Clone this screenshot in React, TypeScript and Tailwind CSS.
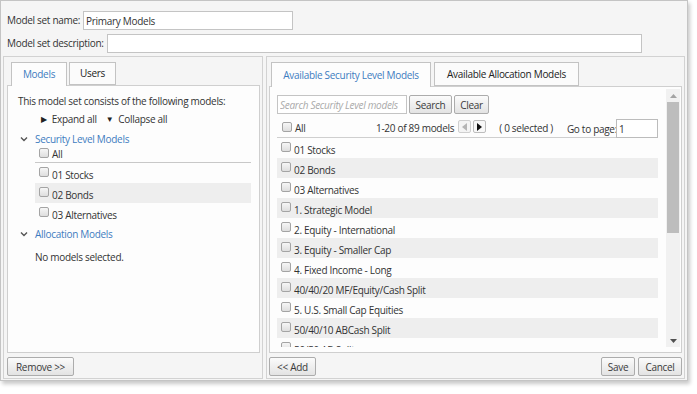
import type { ReactNode } from "react";

const leftModels = ["01 Stocks", "02 Bonds", "03 Alternatives"];

const availableModels = [
  "01 Stocks",
  "02 Bonds",
  "03 Alternatives",
  "1. Strategic Model",
  "2. Equity - International",
  "3. Equity - Smaller Cap",
  "4. Fixed Income - Long",
  "40/40/20 MF/Equity/Cash Split",
  "5. U.S. Small Cap Equities",
  "50/40/10 ABCash Split",
  "50/50 AB Split",
];

function Checkbox({ top = "mt-[4px]" }: { top?: string }) {
  return (
    <span
      className={`${top} h-[10px] w-[10px] shrink-0 rounded-[2px] border border-[#a4a4a4] bg-gradient-to-b from-[#f6f6f6] to-[#dedede]`}
    />
  );
}

function ModelRow({ label, striped }: { label: string; striped: boolean }) {
  return (
    <div
      className={`flex h-[20px] shrink-0 items-start pl-[4px] ${striped ? "bg-[#eeeeee]" : ""}`}
    >
      <Checkbox />
      <span className="ml-[3px] mt-[5px] whitespace-nowrap leading-[14px]">
        {label}
      </span>
    </div>
  );
}

function Button({ children, w }: { children: ReactNode; w: string }) {
  return (
    <button
      type="button"
      className={`${w} flex h-[19px] shrink-0 items-center justify-center rounded-[2px] border border-[#acacac] bg-gradient-to-b from-[#fbfbfb] to-[#e3e3e3] leading-none text-[#3a3a3a]`}
    >
      {children}
    </button>
  );
}

function Chevron() {
  return (
    <svg width="8" height="6" viewBox="0 0 8 6" className="shrink-0">
      <path d="M1 1.5 L4 4.5 L7 1.5" fill="none" stroke="#555" strokeWidth="1.4" />
    </svg>
  );
}

export default function App() {
  return (
    <div className="h-[394px] w-[697px] bg-white font-['Open_Sans',sans-serif] text-[10px] tracking-[-0.3px] text-[#333]">
      <div className="flex h-[381px] w-[688px] flex-col overflow-hidden border border-[#c4c4c4] bg-[#f5f5f5] px-[2px] pb-[1px] shadow-[2px_3px_4px_rgba(0,0,0,0.22)]">
        {/* Name / description */}
        <div className="mt-[10px] flex h-[19px] shrink-0 items-center pl-[4px]">
          <span>Model set name:</span>
          <input
            readOnly
            value="Primary Models"
            className="ml-[3px] h-[19px] w-[210px] border border-[#c4c4c4] bg-white px-[2px] text-[10px] tracking-[-0.3px] text-[#333] outline-none"
          />
        </div>
        <div className="mt-[4px] flex h-[19px] shrink-0 items-center pl-[4px]">
          <span>Model set description:</span>
          <input
            readOnly
            value=""
            className="ml-[3px] h-[19px] w-[535px] border border-[#c4c4c4] bg-white px-[2px] outline-none"
          />
        </div>

        <div className="mt-[3px] flex min-h-0 flex-1 gap-[3px]">
          {/* Left panel */}
          <div className="flex min-h-0 w-[260px] flex-col border border-[#d2d2d2] pb-[2px] pl-[3px] pr-[2px] pt-[5px]">
            <div className="relative z-10 -mb-px ml-[4px] flex shrink-0 gap-[2px]">
              <div className="flex h-[24px] w-[56px] items-center justify-center border border-b-0 border-[#c3c3c3] bg-[#fdfdfd] text-[#3d7cc0]">
                Models
              </div>
              <div className="flex h-[23px] w-[47px] items-center justify-center border border-[#c3c3c3] bg-[#fbfbfb] text-[#222]">
                Users
              </div>
            </div>
            <div className="flex min-h-0 flex-1 flex-col overflow-hidden border border-[#cfcfcf] bg-[#fdfdfd] pl-[10px] pr-[8px] pt-[8px]">
              <div className="leading-[14px]">This model set consists of the following models:</div>
              <div className="ml-[23px] mt-[4px] flex items-center leading-[14px]">
                <span className="text-[8px] text-[#222]">▶</span>
                <span className="ml-[5px]">Expand all</span>
                <span className="ml-[9px] text-[8px] text-[#222]">▼</span>
                <span className="ml-[5px]">Collapse all</span>
              </div>
              <div className="mt-[7px] flex items-center leading-[12px]">
                <span className="ml-[2px] w-[15px]">
                  <Chevron />
                </span>
                <span className="text-[#3d7cc0]">Security Level Models</span>
              </div>
              <div className="ml-[17px]">
                <div className="flex h-[18px] items-start border-b border-[#c8c8c8] pl-[4px]">
                  <Checkbox top="mt-[3px]" />
                  <span className="ml-[3px] mt-[2px] leading-[14px]">All</span>
                </div>
                {leftModels.map((m, i) => (
                  <ModelRow key={m} label={m} striped={i === 1} />
                ))}
              </div>
              <div className="mt-[5px] flex items-center leading-[12px]">
                <span className="ml-[2px] w-[15px]">
                  <Chevron />
                </span>
                <span className="text-[#3d7cc0]">Allocation Models</span>
              </div>
              <div className="ml-[17px] mt-[10px] leading-[14px]">No models selected.</div>
            </div>
            <div className="mt-[4px] flex shrink-0">
              <Button w="w-[67px]">Remove &gt;&gt;</Button>
            </div>
          </div>

          {/* Right panel */}
          <div className="flex min-h-0 w-[419px] flex-col border border-[#d2d2d2] pb-[2px] pl-[2px] pr-[2px] pt-[5px]">
            <div className="relative z-10 -mb-px ml-[2px] flex shrink-0 gap-[3px]">
              <div className="flex h-[25px] w-[160px] items-center justify-center border border-b-0 border-[#c3c3c3] bg-[#fdfdfd] text-[#3d7cc0]">
                Available Security Level Models
              </div>
              <div className="flex h-[24px] w-[145px] items-center justify-center border border-[#c3c3c3] bg-[#fbfbfb] text-[#222]">
                Available Allocation Models
              </div>
            </div>
            <div className="flex min-h-0 flex-1 overflow-hidden border border-[#cfcfcf] bg-[#fdfdfd] pb-[5px] pr-[1px] pt-[2px]">
              <div className="flex min-h-0 flex-1 flex-col overflow-hidden pl-[7px] pr-[8px] pt-[6px]">
                <div className="flex h-[19px] shrink-0 gap-[2px]">
                  <input
                    readOnly
                    placeholder="Search Security Level models"
                    className="h-[19px] w-[130px] border border-[#c4c4c4] bg-white px-[2px] text-[10px] italic tracking-[-0.3px] outline-none placeholder:text-[#aaaaaa]"
                  />
                  <Button w="w-[43px]">Search</Button>
                  <Button w="w-[35px]">Clear</Button>
                </div>
                <div className="mt-[5px] flex h-[19px] shrink-0 items-start border-b border-[#cfcfcf]">
                  <div className="flex w-[99px] items-start pl-[5px]">
                    <Checkbox top="mt-[3px]" />
                    <span className="ml-[3px] mt-[2px] leading-[14px]">All</span>
                  </div>
                  <span className="mt-[2px] whitespace-nowrap leading-[14px]">1-20 of 89 models</span>
                  <span className="ml-[4px] mt-[1px] flex h-[13px] w-[13px] items-center justify-center rounded-[2px] border border-[#cfcfcf] bg-[#f4f4f4]">
                    <svg width="5" height="8" viewBox="0 0 5 8">
                      <path d="M5 0 L0 4 L5 8 Z" fill="#b5b5b5" />
                    </svg>
                  </span>
                  <span className="ml-[2px] mt-[1px] flex h-[13px] w-[13px] items-center justify-center rounded-[2px] border border-[#bdbdbd] bg-[#f8f8f8]">
                    <svg width="5" height="8" viewBox="0 0 5 8">
                      <path d="M0 0 L5 4 L0 8 Z" fill="#111" />
                    </svg>
                  </span>
                  <span className="ml-[13px] mt-[2px] whitespace-nowrap leading-[14px]">( 0 selected )</span>
                  <span className="ml-auto mt-[3px] whitespace-nowrap leading-[14px]">Go to page:</span>
                  <input
                    readOnly
                    value="1"
                    className="-ml-[1px] h-[19px] w-[42px] shrink-0 border border-[#bcbcbc] bg-white px-[2px] text-[10px] text-[#333] outline-none"
                  />
                </div>
                {availableModels.map((m, i) => (
                  <ModelRow key={m} label={m} striped={i % 2 === 1} />
                ))}
              </div>
              {/* Scrollbar */}
              <div className="flex w-[14px] shrink-0 flex-col bg-[#f1f1f1]">
                <div className="flex h-[13px] shrink-0 items-center justify-center">
                  <svg width="7" height="4" viewBox="0 0 7 4">
                    <path d="M0 4 L3.5 0 L7 4 Z" fill="#a3a3a3" />
                  </svg>
                </div>
                <div className="mx-[1px] h-[131px] shrink-0 bg-[#bdbdbd]" />
                <div className="flex-1" />
                <div className="flex h-[13px] shrink-0 items-center justify-center">
                  <svg width="7" height="4" viewBox="0 0 7 4">
                    <path d="M0 0 L3.5 4 L7 0 Z" fill="#505050" />
                  </svg>
                </div>
              </div>
            </div>
            <div className="mt-[4px] flex shrink-0 gap-[3px]">
              <Button w="w-[47px]">&lt;&lt; Add</Button>
              <div className="flex-1" />
              <Button w="w-[34px]">Save</Button>
              <Button w="w-[44px]">Cancel</Button>
            </div>
          </div>
        </div>
      </div>
    </div>
  );
}
